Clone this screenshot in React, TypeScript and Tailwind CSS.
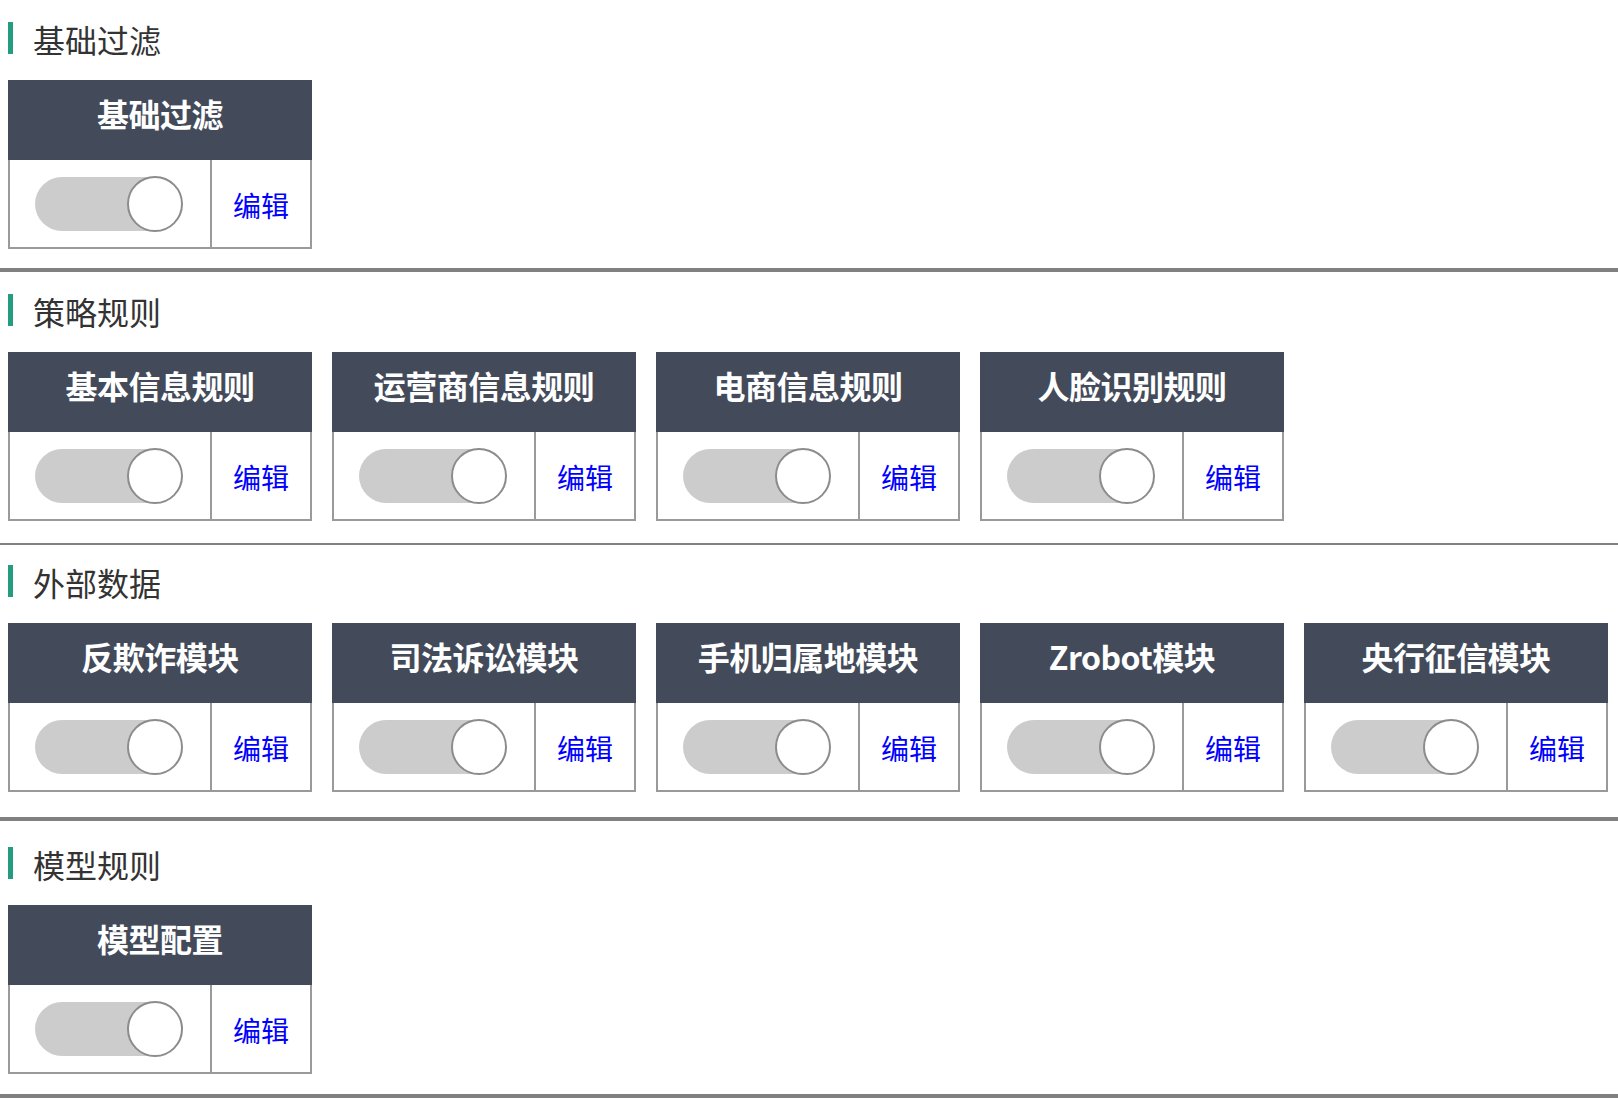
import React from "react";

type Section = {
  title: string;
  items: string[];
  pt: string;
  gapAfter: string;
  line: string;
};

const sections: Section[] = [
  { title: "基础过滤", items: ["基础过滤"], pt: "pt-[22px]", gapAfter: "mt-[19px]", line: "h-[4px]" },
  {
    title: "策略规则",
    items: ["基本信息规则", "运营商信息规则", "电商信息规则", "人脸识别规则"],
    pt: "pt-[22px]",
    gapAfter: "mt-[22px]",
    line: "h-[2px]",
  },
  {
    title: "外部数据",
    items: ["反欺诈模块", "司法诉讼模块", "手机归属地模块", "Zrobot模块", "央行征信模块"],
    pt: "pt-[20px]",
    gapAfter: "mt-[25px]",
    line: "h-[4px]",
  },
  { title: "模型规则", items: ["模型配置"], pt: "pt-[26px]", gapAfter: "mt-[20px]", line: "h-[4px]" },
];

function Toggle() {
  return (
    <div className="relative w-[148px] h-[56px]">
      <div className="absolute left-0 top-[1px] w-[120px] h-[54px] rounded-l-full bg-[#cccccc]" />
      <div className="absolute right-0 top-0 w-[56px] h-[56px] rounded-full bg-white border-2 border-[#8c8c8c]" />
    </div>
  );
}

function Card({ name }: { name: string }) {
  return (
    <div className="flex flex-col w-[304px]">
      <div className="h-[80px] bg-[#434b5b] flex items-center justify-center pb-[14px]">
        <span className="text-[32px] leading-[40px] font-bold text-white tracking-[-0.5px]">{name}</span>
      </div>
      <div className="h-[89px] flex border-2 border-t-0 border-[#9a9a9a]">
        <div className="w-[202px] border-r-2 border-[#9a9a9a] flex items-center justify-center pr-[2px]">
          <Toggle />
        </div>
        <div className="flex-1 flex items-center justify-center">
          <span className="text-[28px] leading-[32px] text-[#0000ff] pt-[2px]">编辑</span>
        </div>
      </div>
    </div>
  );
}

export default function App() {
  return (
    <div
      className="w-[1618px] bg-white"
      style={{ fontFamily: '"Noto Sans CJK SC", "Noto Sans", sans-serif' }}
    >
      {sections.map((s) => (
        <div key={s.title}>
          <div className={`${s.pt} px-[8px]`}>
            <div className="flex items-center h-[32px] mb-[26px]">
              <div className="w-[5px] h-[32px] bg-[#239c80]" />
              <span className="ml-[20px] text-[32px] leading-[32px] text-[#333333] pt-[2px]">{s.title}</span>
            </div>
            <div className="flex gap-[20px]">
              {s.items.map((it) => (
                <Card key={it} name={it} />
              ))}
            </div>
          </div>
          <div className={`${s.gapAfter} ${s.line} bg-[#808080]`} />
        </div>
      ))}
    </div>
  );
}
